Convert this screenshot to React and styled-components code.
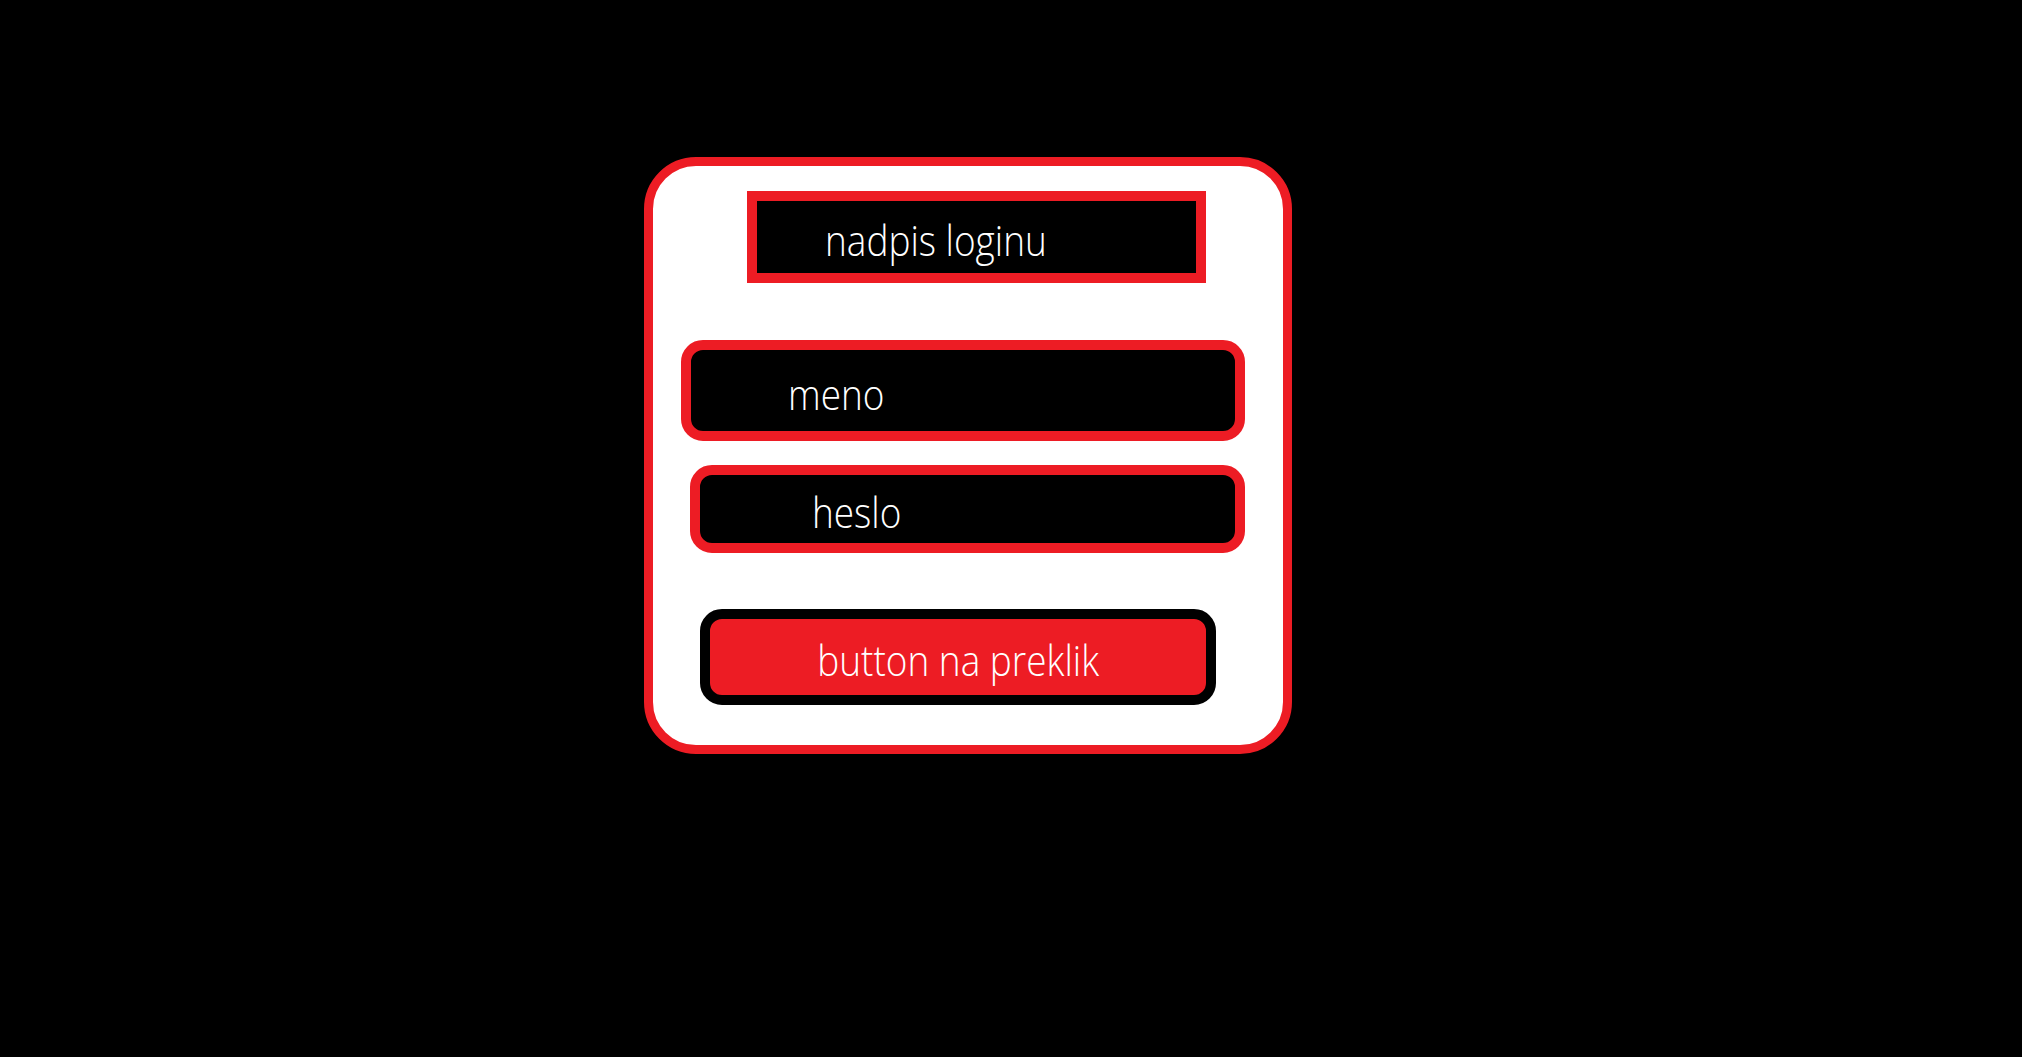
import styled, { createGlobalStyle } from "styled-components";

const red = "#ed1c24";

const GlobalStyle = createGlobalStyle`
    html, body {
        margin: 0;
        padding: 0;
        background: #000;
    }

    body {
        min-height: 100vh;
        font-family: 'Open Sans', 'Noto Sans', sans-serif;
    }
`;

const App = () => {
    return (
        <>
            <GlobalStyle />
            <Page>
                <Card>
                    <Heading>
                        <Label>nadpis loginu</Label>
                    </Heading>
                    <Field $offset={28} $width={564} $height={101} $indent={97} $gap={24}>
                        <Label>meno</Label>
                    </Field>
                    <Field $offset={37} $width={555} $height={88} $indent={112} $gap={56}>
                        <Label>heslo</Label>
                    </Field>
                    <Button type="button">
                        <Label $center>button na preklik</Label>
                    </Button>
                </Card>
            </Page>
        </>
    );
};

export default App;

const Page = styled.div`
    display: flex;
    align-items: flex-start;
    min-height: 1057px;
    padding: 157px 0 0 644px;
    box-sizing: border-box;
    background: #000;
`;

const Card = styled.div`
    display: flex;
    flex-direction: column;
    align-items: flex-start;
    box-sizing: border-box;
    width: 648px;
    height: 597px;
    padding-top: 25px;
    background: #fff;
    border: 9px solid ${red};
    border-radius: 52px;
`;

const Label = styled.span`
    display: inline-block;
    color: #fff;
    font-family: 'Open Sans', 'Noto Sans', sans-serif;
    font-size: 42px;
    font-weight: 360;
    line-height: 1;
    white-space: nowrap;
    transform: scaleX(0.88);
    transform-origin: ${(p) => (p.$center ? "center" : "left")} center;
    -webkit-font-smoothing: antialiased;
    position: relative;
    top: 3px;
`;

const Heading = styled.div`
    display: flex;
    align-items: center;
    box-sizing: border-box;
    width: 459px;
    height: 92px;
    margin: 0 0 57px 94px;
    padding-left: 68px;
    background: #000;
    border: 10px solid ${red};
`;

const Field = styled.div`
    display: flex;
    align-items: center;
    box-sizing: border-box;
    width: ${(p) => p.$width}px;
    height: ${(p) => p.$height}px;
    margin: 0 0 ${(p) => p.$gap}px ${(p) => p.$offset}px;
    padding-left: ${(p) => p.$indent}px;
    background: #000;
    border: 10px solid ${red};
    border-radius: 22px;
`;

const Button = styled.button`
    display: flex;
    align-items: center;
    justify-content: center;
    box-sizing: border-box;
    width: 516px;
    height: 96px;
    margin: 0 0 0 47px;
    padding: 0;
    background: ${red};
    border: 10px solid #000;
    border-radius: 22px;
    cursor: pointer;
`;
